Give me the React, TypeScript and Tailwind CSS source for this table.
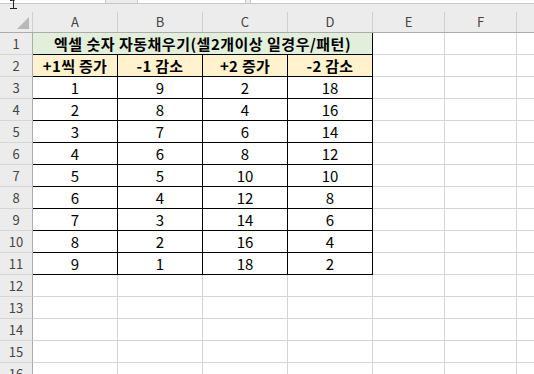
import React from 'react';

const cols = ['A', 'B', 'C', 'D', 'E', 'F'];

const heads = ['+1씩 증가', '-1 감소', '+2 증가', '-2 감소'];

const data = [
  [1, 9, 2, 18],
  [2, 8, 4, 16],
  [3, 7, 6, 14],
  [4, 6, 8, 12],
  [5, 5, 10, 10],
  [6, 4, 12, 8],
  [7, 3, 14, 6],
  [8, 2, 16, 4],
  [9, 1, 18, 2],
];

const grid = 'grid grid-cols-[33px_85px_85px_85px_85px_72px_72px_1fr]';

function RowHead({ n }: { n: number }) {
  return (
    <div className="h-[22px] flex items-center justify-center bg-[#ececec] border-r border-r-[#acacac] border-b border-b-[#d6d6d6] text-[13px] text-[#444]">
      {n}
    </div>
  );
}

function Blank() {
  return <div className="h-[22px] border-r border-b border-[#d4d4d4]" />;
}

export default function App() {
  return (
    <div
      className="w-[534px] h-[374px] overflow-hidden bg-white text-black"
      style={{ fontFamily: '"Noto Sans CJK KR", "Noto Sans", sans-serif' }}
    >
      {/* formula bar remnant */}
      <div className="h-[12px] bg-[#ececec] relative">
        <div className="flex h-[4px] border-b border-[#c6c6c6] bg-white">
          <div className="w-[106px] border-r border-[#c6c6c6]" />
          <div className="w-[31px] bg-[#ececec]" />
          <div className="w-[109px] border-x border-[#c6c6c6]" />
          <div className="w-[4px] bg-[#ececec]" />
          <div className="flex-1 border-l border-[#c6c6c6]" />
        </div>
        <svg className="absolute left-[9px] top-0" width="9" height="9" viewBox="0 0 9 9">
          <path d="M1 0.5h2.5M5.5 0.5h-2M4.5 0.5v7.5M1 8.5h7" stroke="#222" strokeWidth="1" fill="none" />
        </svg>
      </div>

      {/* column headers */}
      <div className={`${grid} h-[21px] bg-[#ececec] border-b border-[#acacac]`}>
        <div className="relative border-r border-[#d0d0d0]">
          <svg className="absolute right-[3px] bottom-[3px]" width="12" height="12" viewBox="0 0 12 12">
            <path d="M12 0L12 12L0 12Z" fill="#b8b8b8" />
          </svg>
        </div>
        {cols.map((c) => (
          <div key={c} className="flex items-center justify-center border-r border-[#d0d0d0] text-[13px] text-[#444]">
            {c}
          </div>
        ))}
        <div />
      </div>

      {/* row 1 */}
      <div className={grid}>
        <RowHead n={1} />
        <div className="col-span-4 h-[22px] flex items-center justify-center bg-[#e2efda] border-r border-b border-black font-bold text-[15px] tracking-[0.5px] leading-none">
          엑셀 숫자 자동채우기(셀2개이상 일경우/패턴)
        </div>
        <Blank />
        <Blank />
        <div className="h-[22px] border-b border-[#d4d4d4]" />
      </div>

      {/* row 2 */}
      <div className={grid}>
        <RowHead n={2} />
        {heads.map((h) => (
          <div key={h} className="h-[22px] flex items-center justify-center bg-[#fff2cc] border-r border-b border-black font-bold text-[15px] tracking-[0.3px] leading-none">
            {h}
          </div>
        ))}
        <Blank />
        <Blank />
        <div className="h-[22px] border-b border-[#d4d4d4]" />
      </div>

      {data.map((r, i) => (
        <div key={i} className={grid}>
          <RowHead n={i + 3} />
          {r.map((v, j) => (
            <div key={j} className="h-[22px] flex items-center justify-center border-r border-b border-black text-[15px] leading-none">
              {v}
            </div>
          ))}
          <Blank />
          <Blank />
          <div className="h-[22px] border-b border-[#d4d4d4]" />
        </div>
      ))}

      {[12, 13, 14, 15, 16].map((n) => (
        <div key={n} className={grid}>
          <RowHead n={n} />
          <Blank />
          <Blank />
          <Blank />
          <Blank />
          <Blank />
          <Blank />
          <div className="h-[22px] border-b border-[#d4d4d4]" />
        </div>
      ))}
    </div>
  );
}
